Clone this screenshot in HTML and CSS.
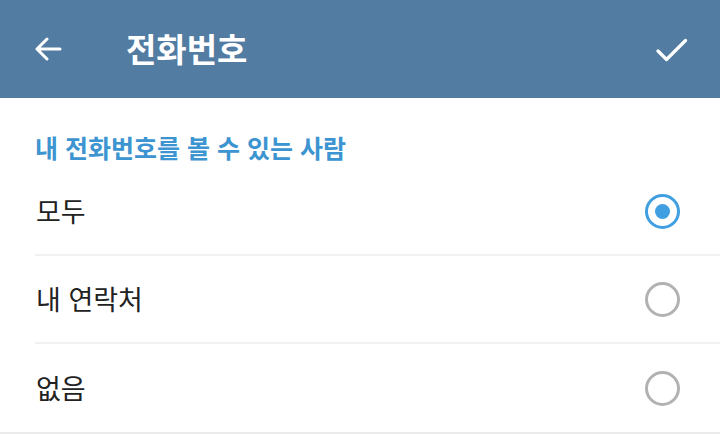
FILE: index.html
```html
<!DOCTYPE html>
<html lang="ko">
<head>
<meta charset="utf-8">
<link rel="stylesheet" href="styles.css">
</head>
<body>
<header class="bar">
  <svg class="icon back" width="28" height="24" viewBox="0 0 28 24"><path d="M26 12H3M13 2L3 12l10 10" fill="none" stroke="#fff" stroke-width="3" stroke-linecap="round" stroke-linejoin="round"/></svg>
  <h1 class="title">전화번호</h1>
  <svg class="icon check" width="32" height="24" viewBox="0 0 32 24"><path d="M2 13l8.5 8.5L29.5 2.5" fill="none" stroke="#fff" stroke-width="3.2" stroke-linecap="round" stroke-linejoin="round"/></svg>
</header>
<main class="content">
  <div class="section">내 전화번호를 볼 수 있는 사람</div>
  <div class="row"><span class="label">모두</span><span class="radio on"></span></div>
  <div class="row"><span class="label">내 연락처</span><span class="radio"></span></div>
  <div class="row last"><span class="label">없음</span><span class="radio"></span></div>
</main>
<div class="footer"></div>
</body>
</html>
```
FILE: styles.css
```css
html, body { margin: 0; padding: 0; }
body {
  width: 720px;
  height: 434px;
  overflow: hidden;
  background: #fff;
  font-family: "Noto Sans CJK KR", "Noto Sans", sans-serif;
}
.bar {
  height: 98px;
  background: #527ca2;
  display: flex;
  align-items: center;
  padding: 0 32px 0 34px;
  box-sizing: border-box;
}
.back { flex: none; }
.title {
  margin: 0 0 0 64px;
  font-size: 33px;
  font-weight: 700;
  color: #fff;
  flex: 1;
  line-height: 1;
  padding-bottom: 2px;
}
.check { flex: none; margin-top: 2px; }
.content { padding-left: 35px; }
.section {
  height: 70px;
  box-sizing: border-box;
  padding-top: 32px;
  font-size: 25px;
  font-weight: 700;
  color: #3c94d0;
  line-height: 34px;
}
.row {
  height: 88px;
  box-sizing: border-box;
  display: flex;
  align-items: center;
  justify-content: space-between;
  padding-right: 40px;
  border-bottom: 2px solid #f1f1f1;
}
.row.last { border-bottom: none; }
.label {
  font-size: 27px;
  color: #222;
  padding-left: 1px;
  padding-bottom: 2px;
}
.radio {
  width: 35px;
  height: 35px;
  box-sizing: border-box;
  border-radius: 50%;
  border: 3.5px solid #b2b2b2;
  position: relative;
}
.radio.on { border-color: #3f9fe0; }
.radio.on::after {
  content: "";
  position: absolute;
  left: 50%; top: 50%;
  width: 15px; height: 15px;
  margin: -7.5px 0 0 -7.5px;
  border-radius: 50%;
  background: #3f9fe0;
}
.footer { height: 2px; background: #ebebeb; }
```
